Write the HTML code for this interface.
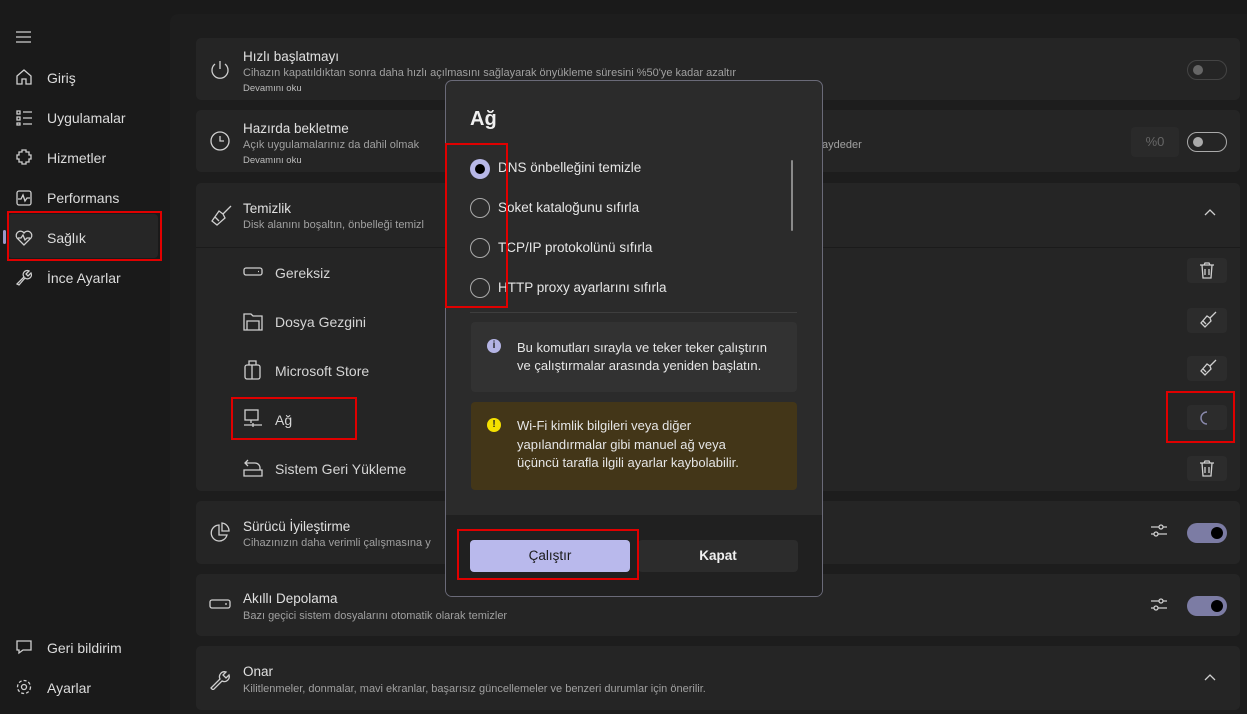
<!DOCTYPE html>
<html><head><meta charset="utf-8"><style>
*{box-sizing:border-box;margin:0;padding:0}
body{width:1247px;height:714px;overflow:hidden;background:#1a1a1a;font-family:"Liberation Sans",sans-serif;color:#e6e6e6;position:relative}
.a{position:absolute}
.nav{position:absolute;left:47px;font-size:14px;color:#dcdcdc}
.ni{position:absolute;left:15px;width:18px;height:18px}
.main{position:absolute;left:170px;top:14px;width:1077px;height:700px;background:#1d1d1d;border-top-left-radius:8px}
.card{position:absolute;left:196px;width:1044px;background:#252525;border-radius:5px}
.t{position:absolute;left:243px;font-size:13.5px;color:#e0e0e0}
.s{position:absolute;left:243px;font-size:11px;color:#a0a0a0}
.d{position:absolute;left:243px;font-size:9.5px;color:#bdbdbd}
.sub{position:absolute;left:275px;font-size:14px;color:#d5d5d5}
.btn{position:absolute;left:1187px;width:40px;height:25px;background:#2c2c2c;border-radius:4px}
.red{position:absolute;border:2.5px solid #e00000}
.tog{position:absolute;left:1187px;width:40px;height:20px;border-radius:10px}
svg{position:absolute;fill:none;stroke:#cfcfcf;stroke-width:1.3}
</style></head><body>
<!-- sidebar -->
<svg style="left:15px;top:30px" width="17" height="14"><path d="M1 2h15M1 7h15M1 12h15"/></svg>
<svg style="left:15px;top:68px" width="18" height="18"><path d="M2 8l7-6 7 6v8h-5v-5h-4v5H2z"/></svg>
<div class="nav" style="top:70px">Giriş</div>
<svg style="left:15px;top:109px" width="18" height="18"><path d="M2 2h3v3H2zM2 8h3v3H2zM2 14h3v2H2zM8 3h9M8 9h9M8 15h9"/></svg>
<div class="nav" style="top:110px">Uygulamalar</div>
<svg style="left:15px;top:148px" width="18" height="18"><path d="M7 2h4v2h3v3h2v4h-2v3h-3v2H7v-2H4v-3H2V7h2V4h3z"/></svg>
<div class="nav" style="top:150px">Hizmetler</div>
<svg style="left:15px;top:189px" width="18" height="18"><rect x="2" y="2" width="14" height="14" rx="2"/><path d="M3 10h3l2-4 2 6 2-3h3"/></svg>
<div class="nav" style="top:190px">Performans</div>
<div class="a" style="left:8px;top:214px;width:150px;height:44px;background:#262626;border-radius:4px"></div>
<div class="a" style="left:3px;top:230px;width:3px;height:14px;background:#9a9ac8;border-radius:2px"></div>
<svg style="left:15px;top:229px" width="18" height="18"><path d="M9 16L2 9a4 4 0 017-5 4 4 0 017 5zM3 9h3l2-3 2 5 2-2h3"/></svg>
<div class="nav" style="top:230px">Sağlık</div>
<div class="red" style="left:7px;top:211px;width:155px;height:50px"></div>
<svg style="left:15px;top:268px" width="18" height="18"><path d="M2 16l7-7a4 4 0 015-6l-3 3 2 2 3-3a4 4 0 01-6 5l-6 7z"/></svg>
<div class="nav" style="top:270px">İnce Ayarlar</div>
<svg style="left:15px;top:638px" width="18" height="18"><path d="M2 3h14v9H8l-4 3v-3H2z"/></svg>
<div class="nav" style="top:640px">Geri bildirim</div>
<svg style="left:15px;top:678px" width="18" height="18"><circle cx="9" cy="9" r="2.5"/><circle cx="9" cy="9" r="6.5" stroke-dasharray="3 2"/></svg>
<div class="nav" style="top:680px">Ayarlar</div>

<div class="main"></div>
<!-- cards -->
<div class="card" style="top:38px;height:62px"></div>
<svg style="left:209px;top:59px" width="22" height="22"><path d="M11 2v8M6 5a8 8 0 1010 0"/></svg>
<div class="t" style="top:49px">Hızlı başlatmayı</div>
<div class="s" style="top:67px">Cihazın kapatıldıktan sonra daha hızlı açılmasını sağlayarak önyükleme süresini %50'ye kadar azaltır</div>
<div class="d" style="top:83px">Devamını oku</div>
<div class="tog" style="top:60px;border:1px solid #444"><div class="a" style="left:5px;top:4px;width:10px;height:10px;border-radius:5px;background:#666"></div></div>

<div class="card" style="top:110px;height:62px"></div>
<svg style="left:209px;top:130px" width="22" height="22"><circle cx="11" cy="11" r="9"/><path d="M11 6v5h4"/></svg>
<div class="t" style="top:121px">Hazırda bekletme</div>
<div class="s" style="top:139px">Açık uygulamalarınız da dahil olmak</div>
<div class="s" style="top:139px;left:822px">aydeder</div>
<div class="d" style="top:155px">Devamını oku</div>
<div class="a" style="left:1131px;top:127px;width:48px;height:30px;background:#2a2a2a;border-radius:4px;color:#666;font-size:13px;text-align:center;line-height:30px">%0</div>
<div class="tog" style="top:132px;border:1px solid #aaa"><div class="a" style="left:5px;top:4px;width:10px;height:10px;border-radius:5px;background:#aaa"></div></div>

<div class="card" style="top:183px;height:308px"></div>
<div class="a" style="left:196px;top:247px;width:1044px;height:1px;background:#1b1b1b"></div>
<svg style="left:209px;top:203px" width="24" height="24"><path d="M22 3l-8 8M14 11l-4-3-7 10 5 4 8-7zM6 14l4 4"/></svg>
<div class="t" style="top:201px">Temizlik</div>
<div class="s" style="top:219px">Disk alanını boşaltın, önbelleği temizl</div>
<svg style="left:1204px;top:209px" width="12" height="8"><path d="M1 6l5-5 5 5"/></svg>
<svg style="left:243px;top:266px" width="20" height="12"><rect x="1" y="2" width="18" height="7" rx="2"/><path d="M15 5.5h1"/></svg>
<div class="sub" style="top:265px">Gereksiz</div>
<svg style="left:243px;top:312px" width="20" height="20"><path d="M1 2h7l2 2h9v14H1zM4 9h12v9H4z"/></svg>
<div class="sub" style="top:314px">Dosya Gezgini</div>
<svg style="left:244px;top:359px" width="18" height="22"><rect x="1" y="6" width="15" height="14" rx="2"/><path d="M5 6V2h7v4M8 6v14"/></svg>
<div class="sub" style="top:363px">Microsoft Store</div>
<svg style="left:243px;top:409px" width="20" height="22"><rect x="2" y="1" width="13" height="10"/><path d="M8 11v3M1 16h18M10 14v4"/></svg>
<div class="sub" style="top:412px">Ağ</div>
<div class="red" style="left:231px;top:397px;width:126px;height:43px"></div>
<svg style="left:243px;top:456px" width="20" height="22"><path d="M5 4L2 7l3 3M2 7h10a5 5 0 015 5v2M1 14h18v6H1z"/></svg>
<div class="sub" style="top:461px">Sistem Geri Yükleme</div>
<div class="btn" style="top:258px"></div><svg style="left:1199px;top:262px" width="16" height="18"><path d="M1 3h14M5 3l1-2h4l1 2M3 3l1 13h8l1-13M6 7v6M10 7v6"/></svg>
<div class="btn" style="top:308px"></div><svg style="left:1198px;top:311px" width="20" height="18"><path d="M18 1l-6 6M12 7l-3-2-6 7 4 4 6-6zM5 10l3 3"/></svg>
<div class="btn" style="top:356px"></div><svg style="left:1198px;top:359px" width="20" height="18"><path d="M18 1l-6 6M12 7l-3-2-6 7 4 4 6-6zM5 10l3 3"/></svg>
<div class="btn" style="top:405px"></div><svg style="left:1199px;top:410px" width="14" height="16"><path d="M8 2a6 6 0 000 12" stroke="#8888aa" stroke-width="1.5"/></svg>
<div class="red" style="left:1166px;top:391px;width:69px;height:52px"></div>
<div class="btn" style="top:456px"></div><svg style="left:1199px;top:460px" width="16" height="18"><path d="M1 3h14M5 3l1-2h4l1 2M3 3l1 13h8l1-13M6 7v6M10 7v6"/></svg>

<div class="card" style="top:501px;height:63px"></div>
<svg style="left:209px;top:521px" width="24" height="24"><path d="M10 4a8 8 0 108 10h-8zM13 2a8 8 0 017 8h-7z"/></svg>
<div class="t" style="top:519px">Sürücü İyileştirme</div>
<div class="s" style="top:537px">Cihazınızın daha verimli çalışmasına y</div>
<svg style="left:1150px;top:522px" width="18" height="18"><path d="M1 5h16M1 12h16" /><circle cx="11" cy="5" r="2" fill="#252525"/><circle cx="6" cy="12" r="2" fill="#252525"/></svg>
<div class="tog" style="top:523px;background:#7c7ca4"><div class="a" style="left:24px;top:4px;width:12px;height:12px;border-radius:6px;background:#000"></div></div>

<div class="card" style="top:574px;height:62px"></div>
<svg style="left:209px;top:598px" width="24" height="14"><rect x="1" y="2" width="20" height="8" rx="2"/><path d="M16 6h2"/></svg>
<div class="t" style="top:591px">Akıllı Depolama</div>
<div class="s" style="top:610px">Bazı geçici sistem dosyalarını otomatik olarak temizler</div>
<svg style="left:1150px;top:596px" width="18" height="18"><path d="M1 5h16M1 12h16" /><circle cx="11" cy="5" r="2" fill="#252525"/><circle cx="6" cy="12" r="2" fill="#252525"/></svg>
<div class="tog" style="top:596px;background:#7c7ca4"><div class="a" style="left:24px;top:4px;width:12px;height:12px;border-radius:6px;background:#000"></div></div>

<div class="card" style="top:646px;height:64px"></div>
<svg style="left:209px;top:666px" width="24" height="24"><path d="M2 22l9-9a5 5 0 016-7l-3 3 3 3 3-3a5 5 0 01-7 6l-9 9z"/></svg>
<div class="t" style="top:664px">Onar</div>
<div class="s" style="top:683px">Kilitlenmeler, donmalar, mavi ekranlar, başarısız güncellemeler ve benzeri durumlar için önerilir.</div>
<svg style="left:1204px;top:674px" width="12" height="8"><path d="M1 6l5-5 5 5"/></svg>

<!-- dialog -->
<div class="a" style="left:445px;top:80px;width:378px;height:517px;background:#2b2b2b;border:1px solid #6a6a78;border-radius:7px;overflow:hidden">
 <div class="a" style="left:0;top:434px;width:378px;height:83px;background:#202020"></div>
</div>
<div class="a" style="left:470px;top:108px;font-size:20px;font-weight:bold;color:#f0f0f0">Ağ</div>
<div class="a" style="left:470px;top:159px;width:20px;height:20px;border-radius:10px;background:#b8b8e8"><div class="a" style="left:5px;top:5px;width:10px;height:10px;border-radius:5px;background:#000"></div></div>
<div class="a" style="left:470px;top:198px;width:20px;height:20px;border-radius:10px;border:1.3px solid #aaa"></div>
<div class="a" style="left:470px;top:238px;width:20px;height:20px;border-radius:10px;border:1.3px solid #aaa"></div>
<div class="a" style="left:470px;top:278px;width:20px;height:20px;border-radius:10px;border:1.3px solid #aaa"></div>
<div class="a" style="left:498px;top:160px;font-size:13.5px">DNS önbelleğini temizle</div>
<div class="a" style="left:498px;top:200px;font-size:13.5px">Soket kataloğunu sıfırla</div>
<div class="a" style="left:498px;top:240px;font-size:13.5px">TCP/IP protokolünü sıfırla</div>
<div class="a" style="left:498px;top:280px;font-size:13.5px">HTTP proxy ayarlarını sıfırla</div>
<div class="a" style="left:791px;top:160px;width:2px;height:71px;background:#8a8a8a;border-radius:1px"></div>
<div class="a" style="left:470px;top:312px;width:327px;height:1px;background:#3e3e3e"></div>
<div class="red" style="left:445px;top:143px;width:63px;height:165px"></div>
<div class="a" style="left:471px;top:322px;width:326px;height:70px;background:#323232;border-radius:4px"></div>
<div class="a" style="left:487px;top:339px;width:14px;height:14px;border-radius:7px;background:#b4b4e4;color:#222;font-size:10px;font-weight:bold;text-align:center;line-height:14px">i</div>
<div class="a" style="left:517px;top:339px;font-size:13px;line-height:18px;color:#e6e6e6">Bu komutları sırayla ve teker teker çalıştırın<br>ve çalıştırmalar arasında yeniden başlatın.</div>
<div class="a" style="left:471px;top:402px;width:326px;height:88px;background:#433618;border-radius:4px"></div>
<div class="a" style="left:487px;top:418px;width:14px;height:14px;border-radius:7px;background:#f4e000;color:#222;font-size:10px;font-weight:bold;text-align:center;line-height:14px">!</div>
<div class="a" style="left:517px;top:417px;font-size:13px;line-height:18.5px;color:#e6e6e6">Wi-Fi kimlik bilgileri veya diğer<br>yapılandırmalar gibi manuel ağ veya<br>üçüncü tarafla ilgili ayarlar kaybolabilir.</div>
<div class="a" style="left:470px;top:540px;width:160px;height:32px;background:#b9b9ec;border-radius:4px;color:#1a1a1a;font-size:13.5px;text-align:center;line-height:32px">Çalıştır</div>
<div class="a" style="left:638px;top:540px;width:160px;height:32px;background:#2c2c2c;border-radius:4px;color:#f0f0f0;font-size:13.5px;font-weight:bold;text-align:center;line-height:32px">Kapat</div>
<div class="red" style="left:457px;top:529px;width:182px;height:51px"></div>
</body></html>
